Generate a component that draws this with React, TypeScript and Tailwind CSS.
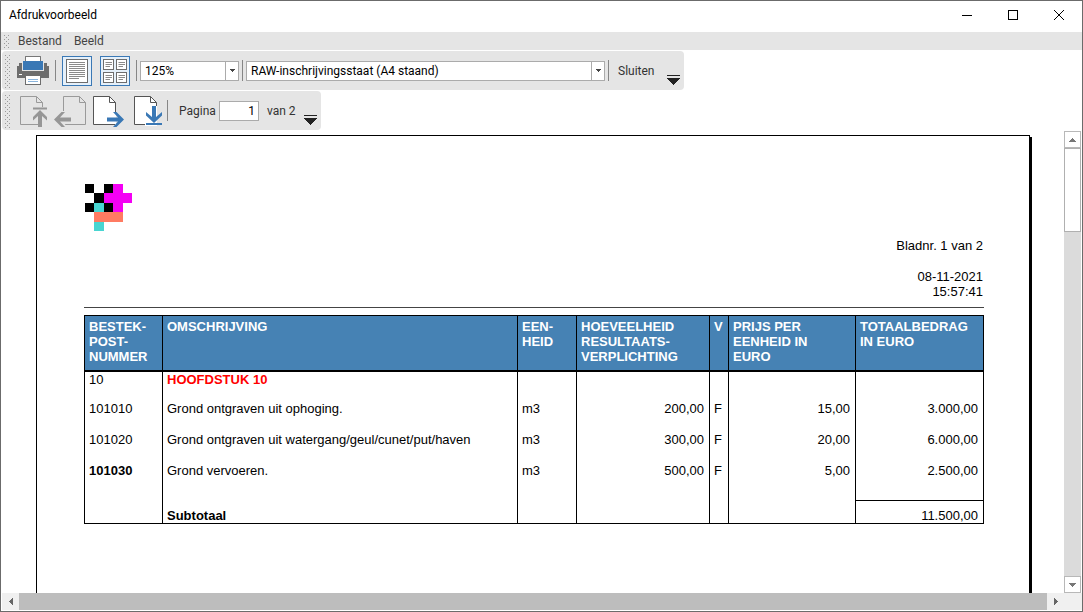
import type { ReactNode } from "react";
import clsx from "clsx";

interface PostRow {
  nummer: string;
  omschrijving: string;
  eenheid?: string;
  hoeveelheid?: string;
  v?: string;
  prijs?: string;
  totaal?: string;
  kind?: "chapter" | "bold";
}

const columns = [
  { lines: ["BESTEK-", "POST-", "NUMMER"], width: "w-[78px]" },
  { lines: ["OMSCHRIJVING"], width: "" },
  { lines: ["EEN-", "HEID"], width: "w-[59px]" },
  { lines: ["HOEVEELHEID", "RESULTAATS-", "VERPLICHTING"], width: "w-[133px]" },
  { lines: ["V"], width: "w-[19px]" },
  { lines: ["PRIJS PER", "EENHEID IN", "EURO"], width: "w-[127px]" },
  { lines: ["TOTAALBEDRAG", "IN EURO"], width: "w-[128px]" },
];

const rows: PostRow[] = [
  { nummer: "10", omschrijving: "HOOFDSTUK 10", kind: "chapter" },
  {
    nummer: "101010",
    omschrijving: "Grond ontgraven uit ophoging.",
    eenheid: "m3",
    hoeveelheid: "200,00",
    v: "F",
    prijs: "15,00",
    totaal: "3.000,00",
  },
  {
    nummer: "101020",
    omschrijving: "Grond ontgraven uit watergang/geul/cunet/put/haven",
    eenheid: "m3",
    hoeveelheid: "300,00",
    v: "F",
    prijs: "20,00",
    totaal: "6.000,00",
  },
  {
    nummer: "101030",
    omschrijving: "Grond vervoeren.",
    eenheid: "m3",
    hoeveelheid: "500,00",
    v: "F",
    prijs: "5,00",
    totaal: "2.500,00",
    kind: "bold",
  },
];

const rowHeights = ["h-[30px]", "h-[31px]", "h-[31px]", "h-[38px]"];

function Grip({ height }: { height: number }) {
  const dots = [];
  for (let y = 1; y < height; y += 4) {
    dots.push(<rect key={`a${y}`} x="0" y={y} width="1" height="1" />);
    dots.push(<rect key={`b${y}`} x="4" y={y} width="1" height="1" />);
    dots.push(<rect key={`c${y}`} x="2" y={y + 2} width="1" height="1" />);
  }
  return (
    <svg width="6" height={height} fill="#9a9a9a" className="shrink-0" aria-hidden="true">
      {dots}
    </svg>
  );
}

function Separator() {
  return <div className="h-[21px] w-px shrink-0 bg-[#868686]" />;
}

function Overflow() {
  return (
    <button type="button" aria-label="Meer opties" className="mb-[5px] shrink-0 self-end">
      <svg width="13" height="10" fill="#222" shapeRendering="crispEdges">
        <rect width="13" height="1" />
        <path d="M0 3h13l-6.5 7z" />
      </svg>
    </button>
  );
}

function IconButton({
  label,
  active,
  disabled,
  children,
}: {
  label: string;
  active?: boolean;
  disabled?: boolean;
  children: ReactNode;
}) {
  return (
    <button
      type="button"
      aria-label={label}
      disabled={disabled}
      className={clsx("shrink-0", active && "border border-[#3a78b5] bg-[#e5f0fa]")}
    >
      {children}
    </button>
  );
}

function PrinterIcon() {
  return (
    <svg width="32" height="29" viewBox="0 0 32 29">
      <path d="M8.5 6V.5h15V6" fill="#fff" stroke="#777" />
      <path d="M0 10h2V7h3v8h22V7h3v3h2v12H0z" fill="#6d6d6d" />
      <rect x="5" y="4" width="22" height="11" fill="#e5e5e5" />
      <path d="M8 1h16v4H8z" fill="#fff" />
      <path d="M8.5 5V.5h15V5" fill="none" stroke="#777" />
      <path d="M6 5h20v9H6z" fill="#3a78b5" />
      <rect x="2" y="18" width="3" height="1" fill="#fff" />
      <rect x="8.5" y="19.5" width="15" height="9" fill="#fff" stroke="#6d6d6d" />
      <path d="M11 23.5h10M11 25.5h10" stroke="#8ab4dc" />
    </svg>
  );
}

function SinglePageIcon() {
  return (
    <svg width="28" height="28" viewBox="0 0 28 28">
      <rect x="3.5" y="2.5" width="21" height="23" fill="#fff" stroke="#6d6d6d" />
      <path
        d="M6 5.5h16M6 7.5h16M6 9.5h16M6 11.5h16M6 13.5h16M6 15.5h16M6 17.5h16M6 19.5h16M6 21.5h10"
        stroke="#8a8a8a"
      />
    </svg>
  );
}

function MultiPageIcon() {
  const tiles = [
    [2.5, 2.5],
    [15.5, 2.5],
    [2.5, 15.5],
    [15.5, 15.5],
  ];
  return (
    <svg width="28" height="28" viewBox="0 0 28 28">
      {tiles.map(([x, y]) => (
        <g key={`${x}-${y}`} transform={`translate(${x} ${y})`}>
          <rect width="10" height="10" fill="#fff" stroke="#6d6d6d" />
          <path d="M2 3h6.5M2 5h6.5M2 7h4.5" stroke="#8a8a8a" />
        </g>
      ))}
    </svg>
  );
}

function FirstPageIcon() {
  return (
    <svg width="29" height="32" viewBox="0 0 29 32" fill="none">
      <path d="M1.5 1.5h16l6 6v22h-22z" stroke="#9a9a9a" />
      <path d="M17.5 1.5v6h6" stroke="#9a9a9a" />
      <path d="M13 12h15v3h-4l6 7v3l-6-4v11h-5V21l-6 4v-3l6-7h-6z" fill="#e5e5e5" />
      <path d="M14 12.5h14v2H14zM21 15l7 7v3.500l-5-4.500v11h-4V21l-5 4.500V22z" fill="#969696" />
    </svg>
  );
}

function PreviousPageIcon() {
  return (
    <svg width="33" height="32" viewBox="0 0 33 32" fill="none">
      <path d="M9.5 18V1.500h16l6 6v22H9.500V27" stroke="#9a9a9a" />
      <path d="M25.5 1.5v6h6" stroke="#9a9a9a" />
      <path d="M8 16h5l-3 5h9v7H10l3 4H8z" fill="#e5e5e5" />
      <path d="M0 24.500 7.500 17H11l-5 5.500h11v4H6l5 5.500H7.500z" fill="#969696" />
    </svg>
  );
}

function NextPageIcon() {
  return (
    <svg width="32" height="32" viewBox="0 0 32 32" fill="none">
      <path d="M.5 1.5h16l6 6v22H.5z" fill="#fff" stroke="#555" />
      <path d="M16.5 1.5v6h6" stroke="#555" />
      <path d="M13 21h9v7h-9zM22 17h1v13h-1z" fill="#fff" />
      <path d="M31 24.500 23.500 17H20l5 5.500H14v4h11L20 32h3.500z" fill="#3a78b5" />
    </svg>
  );
}

function LastPageIcon() {
  return (
    <svg width="30" height="32" viewBox="0 0 30 32" fill="none">
      <path d="M.5 1.5h16l6 6v22H.5z" fill="#fff" stroke="#555" />
      <path d="M16.5 1.5v6h6" stroke="#555" />
      <path d="M11 16l6 4v-9h6v20H11z" fill="#fff" />
      <path d="M18 11h4v11l6-5v3.500L20 28l-8-7.500V17l6 5zM12 28h16v2H12z" fill="#3a78b5" />
    </svg>
  );
}

function ToolbarSelect({ label, value, className }: { label: string; value: string; className: string }) {
  return (
    <div className={clsx("relative h-5", className)}>
      <select
        aria-label={label}
        defaultValue={value}
        className="h-5 w-full appearance-none border border-[#ababab] bg-white pl-1 pr-4 text-black outline-none"
      >
        <option>{value}</option>
      </select>
      <span className="pointer-events-none absolute inset-y-0 right-0 flex w-[14px] items-center justify-center border border-[#ababab]">
        <svg width="5" height="3" fill="#444" shapeRendering="crispEdges">
          <path d="M0 0h5L2.5 3z" />
        </svg>
      </span>
    </div>
  );
}

function Logo() {
  return (
    <svg
      width="47"
      height="47"
      viewBox="0 0 5 5"
      shapeRendering="crispEdges"
      role="img"
      aria-label="Logo"
      className="ml-px"
    >
      <path d="M0 0h1v1H0zM2 0h1v1H2zM1 1h1v1H1zM0 2h1v1H0zM2 2h1v1H2z" fill="#000" />
      <path d="M3 0h1v1h1v1H4v1H3V2H2V1h1z" fill="#f400f4" />
      <path d="M1 2h1v1H1zM1 4h1v1H1z" fill="#48d5d1" />
      <path d="M1 3h3v1H1z" fill="#ff7b62" />
    </svg>
  );
}

function TitleBar() {
  return (
    <header className="flex h-[31px] shrink-0 items-center bg-white pb-[3px] text-black">
      <h1 className="flex-1 pl-2">Afdrukvoorbeeld</h1>
      <div className="flex h-full">
        <button type="button" aria-label="Minimaliseren" className="flex w-[46px] items-center justify-center">
          <svg width="10" height="10">
            <rect y="5" width="10" height="1" />
          </svg>
        </button>
        <button type="button" aria-label="Maximaliseren" className="flex w-[46px] items-center justify-center">
          <svg width="10" height="10" fill="none" stroke="#000">
            <rect x=".5" y=".5" width="9" height="9" />
          </svg>
        </button>
        <button type="button" aria-label="Sluiten" className="flex w-[46px] items-center justify-center">
          <svg width="10" height="10" fill="none" stroke="#000">
            <path d="M0 0l10 10M10 0L0 10" />
          </svg>
        </button>
      </div>
    </header>
  );
}

function MenuBar() {
  return (
    <nav className="flex h-[18px] shrink-0 items-center bg-[#e5e5e5] pl-[3px] text-[#444]">
      <Grip height={15} />
      <div className="flex gap-3 pl-2">
        <button type="button">Bestand</button>
        <button type="button">Beeld</button>
      </div>
    </nav>
  );
}

function Toolbars() {
  return (
    <div className="flex shrink-0 flex-col items-start gap-px bg-white pl-px pt-px text-[#333]">
      <div className="flex h-[39px] items-center rounded-sm bg-[#e5e5e5] pl-[3px] pr-1">
        <Grip height={34} />
        <div className="flex items-center gap-[6px] pl-[6px]">
          <IconButton label="Afdrukken">
            <PrinterIcon />
          </IconButton>
          <Separator />
          <div className="flex gap-2">
            <IconButton label="Enkele pagina" active>
              <SinglePageIcon />
            </IconButton>
            <IconButton label="Meerdere pagina's" active>
              <MultiPageIcon />
            </IconButton>
          </div>
          <Separator />
        </div>
        <div className="flex items-center gap-[3px] pl-[3px]">
          <ToolbarSelect label="Zoom" value="125%" className="w-[99px]" />
          <Separator />
          <ToolbarSelect label="Rapport" value="RAW-inschrijvingsstaat (A4 staand)" className="w-[359px]" />
          <Separator />
        </div>
        <button type="button" className="w-[58px] pl-[9px] text-left">
          Sluiten
        </button>
        <Overflow />
      </div>

      <div className="flex h-[39px] items-center rounded-sm bg-[#e5e5e5] pl-[3px] pr-1">
        <Grip height={34} />
        <div className="flex items-center gap-[6px] pl-2">
          <IconButton label="Eerste pagina" disabled>
            <FirstPageIcon />
          </IconButton>
          <IconButton label="Vorige pagina" disabled>
            <PreviousPageIcon />
          </IconButton>
          <IconButton label="Volgende pagina">
            <NextPageIcon />
          </IconButton>
        </div>
        <div className="flex items-center gap-[3px] pl-[9px]">
          <IconButton label="Laatste pagina">
            <LastPageIcon />
          </IconButton>
          <Separator />
        </div>
        <label htmlFor="pagina" className="w-[51px] pl-[11px]">
          Pagina
        </label>
        <input
          id="pagina"
          defaultValue="1"
          className="h-5 w-10 border border-[#ababab] bg-white pr-[3px] text-right text-black outline-none"
        />
        <span className="w-[45px] pl-2">van 2</span>
        <Overflow />
      </div>
    </div>
  );
}

function ReportTable() {
  return (
    <table className="mt-[7px] w-full table-fixed border-collapse text-left">
      <colgroup>
        {columns.map((column) => (
          <col key={column.lines[0]} className={column.width} />
        ))}
      </colgroup>
      <thead>
        <tr className="h-[55px] bg-[#4682b4] align-top text-white">
          {columns.map((column) => (
            <th key={column.lines[0]} scope="col" className="border border-b-2 border-black px-1 pt-[3px] font-bold">
              {column.lines.map((line) => (
                <span key={line} className="block whitespace-nowrap">
                  {line}
                </span>
              ))}
            </th>
          ))}
        </tr>
      </thead>
      <tbody>
        {rows.map((row, i) => (
          <tr key={row.nummer} className={clsx("align-top", rowHeights[i])}>
            <td className={clsx("border-x border-black px-1", row.kind === "bold" && "font-bold")}>{row.nummer}</td>
            <td className={clsx("border-x border-black px-1", row.kind === "chapter" && "font-bold text-[#ff0000]")}>
              {row.omschrijving}
            </td>
            <td className="border-x border-black px-1">{row.eenheid}</td>
            <td className="border-x border-black px-[5px] text-right">{row.hoeveelheid}</td>
            <td className="border-x border-black px-1">{row.v}</td>
            <td className="border-x border-black px-[5px] text-right">{row.prijs}</td>
            <td className="border-x border-black px-[5px] text-right">{row.totaal}</td>
          </tr>
        ))}
        <tr className="h-[23px] align-bottom">
          <td className="border-x border-b border-black" />
          <th scope="row" className="border-x border-b border-black px-1 font-bold">
            Subtotaal
          </th>
          <td className="border-x border-b border-black" />
          <td className="border-x border-b border-black" />
          <td className="border-x border-b border-black" />
          <td className="border-x border-b border-black" />
          <td className="border border-black px-[5px] text-right">11.500,00</td>
        </tr>
      </tbody>
    </table>
  );
}

function Paper() {
  return (
    <article className="min-h-[1400px] border border-black bg-white pl-[47px] pr-[45px] pt-12 font-['Liberation_Sans',Arial,sans-serif] text-[13px] leading-[15px] text-black shadow-[2px_2px_0_#000]">
      <Logo />
      <div className="mt-[7px] border-b border-[#444] pb-2 pr-px text-right">
        <p className="pb-4">Bladnr. 1 van 2</p>
        <p>08-11-2021</p>
        <p>15:57:41</p>
      </div>
      <ReportTable />
    </article>
  );
}

function VerticalScrollbar() {
  return (
    <div className="flex w-[17px] shrink-0 flex-col bg-[#dbdbdb]">
      <button
        type="button"
        aria-label="Omhoog"
        className="flex h-[17px] items-center justify-center border border-[#b8b8b8] bg-white"
      >
        <svg width="7" height="4" fill="#777" shapeRendering="crispEdges">
          <path d="M3 0h1l3 4H0z" />
        </svg>
      </button>
      <div className="flex-1">
        <div className="h-[84px] border border-[#b0b0b0] bg-white" />
      </div>
      <button
        type="button"
        aria-label="Omlaag"
        className="flex h-[17px] items-center justify-center border border-[#b8b8b8] bg-white"
      >
        <svg width="7" height="4" fill="#777" shapeRendering="crispEdges">
          <path d="M0 0h7L4 4H3z" />
        </svg>
      </button>
    </div>
  );
}

function HorizontalScrollbar() {
  return (
    <div className="mb-px ml-px flex h-[17px] shrink-0 bg-[#f0f0f0] pr-[18px]">
      <button type="button" aria-label="Naar links" className="flex w-[17px] items-center justify-center">
        <svg width="4" height="7" fill="#666" shapeRendering="crispEdges">
          <path d="M4 0v7L0 4V3z" />
        </svg>
      </button>
      <div className="flex-1 bg-[#bdbdbd]" />
      <button type="button" aria-label="Naar rechts" className="flex w-[17px] items-center justify-center">
        <svg width="4" height="7" fill="#666" shapeRendering="crispEdges">
          <path d="M0 0v7l4-3V3z" />
        </svg>
      </button>
    </div>
  );
}

export default function App() {
  return (
    <div className="flex h-screen flex-col overflow-hidden border border-[#6b6b6b] bg-white font-['Segoe_UI',Roboto,sans-serif] text-[12px] leading-4">
      <TitleBar />
      <MenuBar />
      <Toolbars />
      <main className="flex min-h-0 flex-1 pr-px pt-px">
        <div className="flex-1 overflow-hidden pl-[35px] pr-[34px] pt-1">
          <Paper />
        </div>
        <VerticalScrollbar />
      </main>
      <HorizontalScrollbar />
    </div>
  );
}
